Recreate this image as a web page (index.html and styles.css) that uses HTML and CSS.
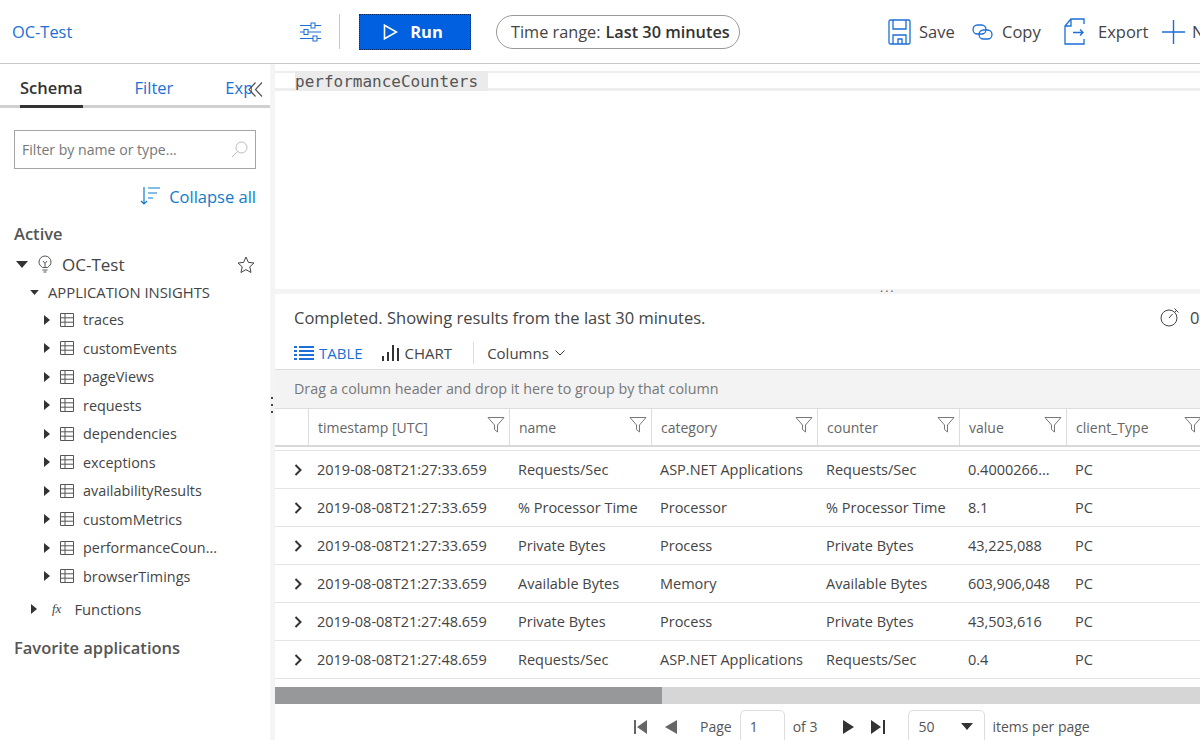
FILE: index.html
```html
<!DOCTYPE html>
<html lang="en">
<head>
    <meta charset="UTF-8">
    <title>OC-Test - Logs</title>
    <link rel="stylesheet" href="styles.css">
</head>
<body>
    <svg class="defs" width="0" height="0">
        <symbol id="i-table" viewBox="0 0 14 14">
            <path d="M.5.5h13v13H.5zM.5 4.800h13M.5 9.200h13M5 .5v13" fill="none" stroke="#555"/>
        </symbol>
        <symbol id="i-funnel" viewBox="0 0 18 18">
            <path d="M1 1.500h16l-6.500 7.500v7l-3-2.500V9z" fill="none" stroke="#777"/>
        </symbol>
        <symbol id="i-caret" viewBox="0 0 6 10">
            <path d="M0 0l6 5-6 5z" fill="#333"/>
        </symbol>
        <symbol id="i-down" viewBox="0 0 12 7">
            <path d="M0 0h12L6 7z" fill="#333"/>
        </symbol>
        <symbol id="i-chevron" viewBox="0 0 8 12">
            <path d="M1.500 1l5 5-5 5" fill="none" stroke="#333" stroke-width="2"/>
        </symbol>
    </svg>

    <header class="topbar">
        <a class="app-name">OC-Test</a>
        <svg class="tune" width="22" height="20" viewBox="0 0 22 20" fill="none" stroke="#1a6fd8">
            <path d="M1 3.500h21M1 10h21M1 16.500h21"/>
            <rect x="12" y="1" width="4" height="5" fill="#fff"/>
            <rect x="5" y="7.500" width="4" height="5" fill="#fff"/>
            <rect x="14" y="14" width="4" height="5" fill="#fff"/>
        </svg>
        <span class="divider"></span>
        <button class="run-btn">
            <svg width="15" height="16" viewBox="0 0 15 16" fill="none" stroke="#fff" stroke-width="1.600"><path d="M1.500 1.200v13.600L13.500 8z"/></svg>
            Run
        </button>
        <div class="time-range">Time range: <b>Last 30 minutes</b></div>
        <div class="actions">
            <span class="action action-save">
                <svg width="23" height="26" viewBox="0 0 23 26" fill="none" stroke="#1a6fd8" stroke-width="1.300"><path d="M1 2.500a1.500 1.500 0 0 1 1.500-1.500h18a1.500 1.500 0 0 1 1.500 1.500v21a1.500 1.500 0 0 1-1.500 1.500h-18a1.500 1.500 0 0 1-1.500-1.500zM5 1v9h13V1M5 25v-9h13v9M10 25v-5h4v5"/></svg>
                Save
            </span>
            <span class="action action-copy">
                <svg width="21" height="16" viewBox="0 0 21 16" fill="none" stroke="#1a6fd8" stroke-width="1.300"><rect x="1" y="1" width="13" height="9" rx="4.500"/><rect x="7" y="6" width="13" height="9" rx="4.500"/></svg>
                Copy
            </span>
            <span class="action action-export">
                <svg width="21" height="27" viewBox="0 0 21 27" fill="none" stroke="#1a6fd8" stroke-width="1.300"><path d="M20 6V1H7L1 8v18h19v-5M1 8h6V1"/><path d="M9 14.500h10M16 11.500l3 3-3 3"/></svg>
                Export
            </span>
            <span class="action action-new">
                <svg width="23" height="24" viewBox="0 0 23 24" fill="none" stroke="#1a6fd8" stroke-width="1.400"><path d="M11.500 0v24M0 12h23"/></svg>
                New
            </span>
        </div>
    </header>

    <div class="main">
        <aside class="sidebar">
            <nav class="tabs">
                <span class="tab tab-active">Schema</span>
                <span class="tab">Filter</span>
                <span class="tab tab-clipped">Explorer</span>
                <svg class="collapse-panel" width="15" height="15" viewBox="0 0 15 15" fill="none" stroke="#555" stroke-width="1.200"><path d="M7.500 .5L1 7.500l6.500 7M14 .5L7.500 7.500l6.500 7"/></svg>
            </nav>
            <div class="search-box">
                <span>Filter by name or type...</span>
                <svg width="17" height="17" viewBox="0 0 17 17" fill="none" stroke="#bbb"><circle cx="10.500" cy="6.500" r="5.500"/><path d="M6.500 10.500L1 16"/></svg>
            </div>
            <div class="collapse-all">
                <svg width="21" height="20" viewBox="0 0 21 20" fill="none" stroke="#0f7ccb" stroke-width="1.200"><path d="M4 1v17M1 15l3 3 3-3M8 2h12M8 7h9M8 12h5"/></svg>
                Collapse all
            </div>
            <h3 class="group-title">Active</h3>
            <div class="tree-app">
                <svg class="caret-down" width="12" height="7"><use href="#i-down"/></svg>
                <svg class="bulb" width="14" height="18" viewBox="0 0 14 18" fill="none" stroke="#555"><path d="M4.500 12.500C2.500 11 1 9.500 1 7a6 6 0 0 1 12 0c0 2.500-1.500 4-3.500 5.500zM4.500 15h5M5.500 17h3M5 6l2 2.500L9 6M7 8.500v4"/></svg>
                <span class="tree-app-name">OC-Test</span>
                <svg width="18" height="17" viewBox="0 0 18 17" fill="none" stroke="#444"><path d="M9 1l2.400 5.400 5.600.6-4.200 3.800 1.200 5.700L9 13.600l-5 2.900 1.200-5.700L1 7l5.600-.6z"/></svg>
            </div>
            <div class="tree-section">
                <svg width="9" height="5"><use href="#i-down"/></svg>
                APPLICATION INSIGHTS
            </div>
            <ul class="tree-tables">
                <li><svg width="6" height="10"><use href="#i-caret"/></svg><svg width="14" height="14"><use href="#i-table"/></svg>traces</li>
                <li><svg width="6" height="10"><use href="#i-caret"/></svg><svg width="14" height="14"><use href="#i-table"/></svg>customEvents</li>
                <li><svg width="6" height="10"><use href="#i-caret"/></svg><svg width="14" height="14"><use href="#i-table"/></svg>pageViews</li>
                <li><svg width="6" height="10"><use href="#i-caret"/></svg><svg width="14" height="14"><use href="#i-table"/></svg>requests</li>
                <li><svg width="6" height="10"><use href="#i-caret"/></svg><svg width="14" height="14"><use href="#i-table"/></svg>dependencies</li>
                <li><svg width="6" height="10"><use href="#i-caret"/></svg><svg width="14" height="14"><use href="#i-table"/></svg>exceptions</li>
                <li><svg width="6" height="10"><use href="#i-caret"/></svg><svg width="14" height="14"><use href="#i-table"/></svg>availabilityResults</li>
                <li><svg width="6" height="10"><use href="#i-caret"/></svg><svg width="14" height="14"><use href="#i-table"/></svg>customMetrics</li>
                <li><svg width="6" height="10"><use href="#i-caret"/></svg><svg width="14" height="14"><use href="#i-table"/></svg>performanceCoun...</li>
                <li><svg width="6" height="10"><use href="#i-caret"/></svg><svg width="14" height="14"><use href="#i-table"/></svg>browserTimings</li>
            </ul>
            <div class="tree-functions">
                <svg width="6" height="10"><use href="#i-caret"/></svg>
                <i class="fx">fx</i>
                Functions
            </div>
            <h3 class="group-title group-favorite">Favorite applications</h3>
        </aside>

        <section class="content">
            <svg class="grip" width="3" height="16" viewBox="0 0 3 16" fill="#444"><rect x="1" y="0" width="2" height="2"/><rect x="1" y="7" width="2" height="2"/><rect x="1" y="14" width="2" height="2"/></svg>
            <div class="editor">
                <div class="editor-line"><span class="editor-text">performanceCounters </span></div>
            </div>
            <div class="splitter"><span>...</span></div>
            <div class="status">
                <span>Completed. Showing results from the last 30 minutes.</span>
                <span class="timer">
                    <svg width="20" height="20" viewBox="0 0 20 20" fill="none" stroke="#444"><circle cx="9" cy="11" r="8"/><path d="M9 11l3.500-4M14.500 1.500l4 4M16.500 3.500l-2 2"/></svg>
                    00:00:01
                </span>
            </div>
            <div class="view-bar">
                <span class="view view-active">
                    <svg width="20" height="14" viewBox="0 0 20 14" stroke="#1a6fd8" stroke-width="2" fill="none"><path d="M0 1h3M5 1h15M0 5h3M5 5h15M0 9h3M5 9h15M0 13h3M5 13h15"/></svg>
                    TABLE
                </span>
                <span class="view view-chart">
                    <svg width="18" height="16" viewBox="0 0 18 16" stroke="#333" stroke-width="2" fill="none"><path d="M1 16v-5M6 16V7M11 16V0M16 16V3"/></svg>
                    CHART
                </span>
                <span class="bar-divider"></span>
                <span class="columns-btn">Columns
                    <svg width="10" height="6" viewBox="0 0 10 6" fill="none" stroke="#333"><path d="M.5.5L5 5 9.500.5"/></svg>
                </span>
            </div>
            <div class="group-panel">Drag a column header and drop it here to group by that column</div>
            <div class="grid-row grid-head">
                <div class="head-cell head-first"></div>
                <div class="head-cell"><span>timestamp [UTC]</span><svg width="18" height="18"><use href="#i-funnel"/></svg></div>
                <div class="head-cell"><span>name</span><svg width="18" height="18"><use href="#i-funnel"/></svg></div>
                <div class="head-cell"><span>category</span><svg width="18" height="18"><use href="#i-funnel"/></svg></div>
                <div class="head-cell"><span>counter</span><svg width="18" height="18"><use href="#i-funnel"/></svg></div>
                <div class="head-cell"><span>value</span><svg width="18" height="18"><use href="#i-funnel"/></svg></div>
                <div class="head-cell"><span>client_Type</span><svg width="18" height="18"><use href="#i-funnel"/></svg></div>
            </div>
            <div class="grid-body">
                <div class="grid-row">
                    <div class="cell cell-toggle"><svg width="8" height="12"><use href="#i-chevron"/></svg></div>
                    <div class="cell">2019-08-08T21:27:33.659</div><div class="cell">Requests/Sec</div><div class="cell">ASP.NET Applications</div><div class="cell">Requests/Sec</div><div class="cell">0.4000266...</div><div class="cell">PC</div>
                </div>
                <div class="grid-row">
                    <div class="cell cell-toggle"><svg width="8" height="12"><use href="#i-chevron"/></svg></div>
                    <div class="cell">2019-08-08T21:27:33.659</div><div class="cell">% Processor Time</div><div class="cell">Processor</div><div class="cell">% Processor Time</div><div class="cell">8.1</div><div class="cell">PC</div>
                </div>
                <div class="grid-row">
                    <div class="cell cell-toggle"><svg width="8" height="12"><use href="#i-chevron"/></svg></div>
                    <div class="cell">2019-08-08T21:27:33.659</div><div class="cell">Private Bytes</div><div class="cell">Process</div><div class="cell">Private Bytes</div><div class="cell">43,225,088</div><div class="cell">PC</div>
                </div>
                <div class="grid-row">
                    <div class="cell cell-toggle"><svg width="8" height="12"><use href="#i-chevron"/></svg></div>
                    <div class="cell">2019-08-08T21:27:33.659</div><div class="cell">Available Bytes</div><div class="cell">Memory</div><div class="cell">Available Bytes</div><div class="cell">603,906,048</div><div class="cell">PC</div>
                </div>
                <div class="grid-row">
                    <div class="cell cell-toggle"><svg width="8" height="12"><use href="#i-chevron"/></svg></div>
                    <div class="cell">2019-08-08T21:27:48.659</div><div class="cell">Private Bytes</div><div class="cell">Process</div><div class="cell">Private Bytes</div><div class="cell">43,503,616</div><div class="cell">PC</div>
                </div>
                <div class="grid-row">
                    <div class="cell cell-toggle"><svg width="8" height="12"><use href="#i-chevron"/></svg></div>
                    <div class="cell">2019-08-08T21:27:48.659</div><div class="cell">Requests/Sec</div><div class="cell">ASP.NET Applications</div><div class="cell">Requests/Sec</div><div class="cell">0.4</div><div class="cell">PC</div>
                </div>
            </div>
            <div class="h-scroll"><div class="h-thumb"></div></div>
            <div class="pager">
                <svg class="pg-first" width="13" height="14" viewBox="0 0 13 14" fill="#666"><path d="M0 0h2v14H0zM13 0v14L3 7z"/></svg>
                <svg class="pg-prev" width="12" height="14" viewBox="0 0 12 14" fill="#666"><path d="M12 0v14L0 7z"/></svg>
                <span class="pg-label">Page</span>
                <span class="pg-input">1</span>
                <span class="pg-of">of 3</span>
                <svg class="pg-next" width="11" height="14" viewBox="0 0 11 14" fill="#333"><path d="M0 0v14l11-7z"/></svg>
                <svg class="pg-last" width="14" height="14" viewBox="0 0 14 14" fill="#333"><path d="M0 0v14l10-7zM12 0h2v14h-2z"/></svg>
                <span class="pg-size">50<svg width="12" height="7"><use href="#i-down"/></svg></span>
                <span class="pg-items">items per page</span>
            </div>
        </section>
    </div>
</body>
</html>
```

FILE: styles.css
```css
/* General */
html, body {
    margin: 0;
    padding: 0;
    height: 740px;
    overflow: hidden;
}

body {
    font-family: "Open Sans", "Noto Sans", sans-serif;
    color: #444;
    background: #fff;
}

.defs {
    position: absolute;
}

svg {
    flex: none;
}

/* Top bar */
.topbar {
    display: flex;
    align-items: center;
    height: 63px;
    border-bottom: 1px solid #c8c8c8;
    white-space: nowrap;
    overflow: hidden;
}

.app-name {
    flex: none;
    width: 287px;
    padding-left: 12px;
    font-size: 16.400px;
    color: #1a6fd8;
}

.divider {
    flex: none;
    width: 1px;
    height: 35px;
    margin: 0 19px 0 18px;
    background: #c8c8c8;
}

.run-btn {
    flex: none;
    display: flex;
    align-items: center;
    justify-content: center;
    gap: 12px;
    width: 112px;
    height: 36px;
    padding: 0 4px 0 0;
    background: #0060df;
    color: #fff;
    border: 1px dotted #0b2a66;
    font: 700 16.500px "Open Sans", sans-serif;
}

.time-range {
    flex: none;
    display: flex;
    align-items: center;
    gap: 5px;
    width: 244px;
    height: 34px;
    box-sizing: border-box;
    margin-left: 25px;
    padding-left: 14px;
    border: 1px solid #999;
    border-radius: 17px;
    font-size: 16.300px;
}

.time-range b {
    font-weight: 600;
    color: #333;
}

.actions {
    flex: none;
    display: flex;
    align-items: center;
    margin-left: 148px;
    font-size: 16.500px;
}

.action {
    display: flex;
    align-items: center;
}

.action-save { width: 84px; gap: 8px; }
.action-copy { width: 92px; gap: 9px; }
.action-export { width: 98px; gap: 13px; }
.action-new { gap: 7px; }

/* Layout */
.main {
    display: flex;
    height: 676px;
}

.sidebar {
    width: 270px;
    flex: none;
    border-right: 5px solid #f4f4f4;
    overflow: hidden;
    white-space: nowrap;
}

.content {
    position: relative;
    flex: 1;
    min-width: 0;
}

/* Sidebar */
.tabs {
    position: relative;
    display: flex;
    height: 44px;
    padding-left: 20px;
    box-sizing: border-box;
    box-shadow: inset 0 -3px #d0d0d0;
    font-size: 16.500px;
    color: #1a6fd8;
}

.tab {
    margin-right: 52px;
    padding-top: 12px;
}

.tab-active {
    height: 29px;
    border-bottom: 3px solid #333;
    color: #333;
    font-weight: 600;
    font-size: 16.500px;
}

.tab-clipped {
    width: 27px;
    margin-right: 0;
    overflow: hidden;
}

.collapse-panel {
    position: absolute;
    left: 248px;
    top: 18px;
}

.search-box {
    display: flex;
    align-items: center;
    justify-content: space-between;
    height: 37px;
    margin: 22px 14px 0 14px;
    padding: 0 7px 0 7px;
    border: 1px solid #a6a6a6;
    font-size: 14.100px;
    color: #777;
}

.collapse-all {
    display: flex;
    align-items: center;
    justify-content: flex-end;
    gap: 8px;
    height: 24px;
    margin: 15px 14px 0 0;
    font-size: 16.500px;
    color: #0f7ccb;
}

.group-title {
    margin: 14px 0 0 14px;
    font-size: 16.500px;
    font-weight: 600;
    line-height: 24px;
    color: #555;
}

.tree-app {
    display: flex;
    align-items: center;
    height: 24px;
    margin: 6px 15px 0 16px;
    font-size: 17px;
}

.bulb {
    margin-left: 10px;
}

.tree-app-name {
    flex: 1;
    margin-left: 10px;
}

.tree-section {
    display: flex;
    align-items: center;
    gap: 9px;
    height: 22px;
    margin: 5px 0 0 30px;
    font-size: 14.800px;
}

.tree-tables {
    list-style: none;
    margin: 2.500px 0 0 0;
    padding: 0 0 0 44px;
    font-size: 14.400px;
}

.tree-tables li {
    display: flex;
    align-items: center;
    height: 28.500px;
}

.tree-tables li svg:first-child {
    margin-right: 10px;
}

.tree-tables li svg + svg {
    margin-right: 9px;
}

.tree-functions {
    display: flex;
    align-items: center;
    height: 24px;
    margin: 6.500px 0 0 31px;
    font-size: 14.800px;
}

.fx {
    margin: 0 13px 0 15px;
    font-family: "Liberation Serif", serif;
    font-size: 13px;
}

.group-favorite {
    margin-top: 15px;
}

/* Editor */
.grip {
    position: absolute;
    left: -5px;
    top: 333px;
}

.editor {
    height: 225px;
    padding-top: 7px;
    box-sizing: border-box;
}

.editor-line {
    height: 15px;
    border-top: 2px solid #eeeeee;
    border-bottom: 3px solid #eeeeee;
}

.editor-text {
    display: inline-block;
    height: 20px;
    margin: -2px 0 0 20px;
    background: #ebebeb;
    font: 16px "DejaVu Sans Mono", monospace;
    line-height: 21px;
    color: #555;
    white-space: pre;
    vertical-align: top;
}

.splitter {
    position: relative;
    height: 5px;
    background: #f4f4f4;
}

.splitter span {
    position: absolute;
    left: 605px;
    top: -7px;
    font-size: 12px;
    line-height: 12px;
    letter-spacing: 2px;
    color: #555;
}

.status {
    display: flex;
    justify-content: space-between;
    align-items: center;
    height: 46px;
    padding-left: 19px;
    font-size: 16.500px;
    white-space: nowrap;
}

.timer {
    display: flex;
    align-items: center;
    gap: 10px;
    width: 40px;
}

.view-bar {
    display: flex;
    align-items: center;
    height: 22px;
    padding: 0 0 0 19px;
    margin: 2px 0 5px;
    font-size: 15px;
}

.view {
    display: flex;
    align-items: center;
    gap: 5px;
}

.view-active {
    color: #1a6fd8;
}

.view-chart {
    margin-left: 19px;
}

.bar-divider {
    width: 1px;
    height: 22px;
    margin: 0 13px 0 21px;
    background: #ddd;
}

.columns-btn {
    display: flex;
    align-items: center;
    gap: 6px;
}

.group-panel {
    height: 38px;
    padding-left: 19px;
    line-height: 38px;
    border-top: 1px solid #ddd;
    border-bottom: 1px solid #ddd;
    background: #f3f3f3;
    font-size: 14.300px;
    color: #777;
    white-space: nowrap;
}

/* Grid */
.grid-row {
    display: grid;
    grid-template-columns: 34px 201px 142px 166px 142px 107px 140px;
    width: 932px;
}

.grid-head {
    height: 36px;
    border-bottom: 2px solid #d8d8d8;
    font-size: 14px;
    color: #666;
}

.head-cell {
    display: flex;
    align-items: center;
    justify-content: space-between;
    padding: 0 4px 0 9px;
    border-right: 1px solid #ddd;
    min-width: 0;
}

.head-cell svg {
    margin-bottom: 5px;
}

.grid-body {
    margin-top: 3px;
    border-top: 1px solid #e4e4e4;
}

.grid-body .grid-row {
    height: 37px;
    border-bottom: 1px solid #e4e4e4;
    width: auto;
    font-size: 14.500px;
    color: #444;
}

.cell {
    display: flex;
    align-items: center;
    padding-left: 8px;
    white-space: nowrap;
    overflow: hidden;
}

.cell-toggle {
    padding-left: 19px;
}

.h-scroll {
    height: 17px;
    margin-top: 8px;
    background: #d6d6d6;
}

.h-thumb {
    width: 387px;
    height: 17px;
    background: #96989a;
}

/* Pager */
.pager {
    display: flex;
    align-items: center;
    height: 45px;
    padding-left: 359px;
    font-size: 14px;
    color: #555;
    white-space: nowrap;
}

.pg-prev { margin-left: 18px; }
.pg-label { margin-left: 23px; }
.pg-of { margin-left: 8px; }
.pg-next { margin-left: 26px; }
.pg-last { margin-left: 17px; }
.pg-items { margin-left: 7px; }

.pg-input {
    display: flex;
    align-items: center;
    width: 45px;
    height: 34px;
    box-sizing: border-box;
    margin-left: 8px;
    padding-left: 9px;
    border: 1px solid #ddd;
    border-radius: 5px;
}

.pg-size {
    display: flex;
    align-items: center;
    justify-content: space-between;
    width: 77px;
    height: 34px;
    box-sizing: border-box;
    margin-left: 23px;
    padding: 0 11px 0 9px;
    border: 1px solid #ddd;
    border-radius: 5px;
}
```
